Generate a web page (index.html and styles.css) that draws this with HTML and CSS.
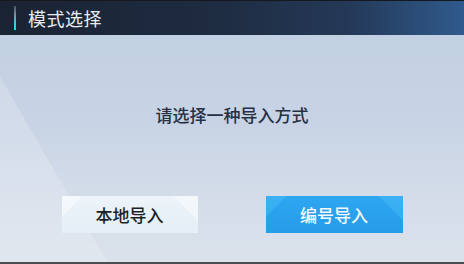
FILE: index.html
```html
<!DOCTYPE html>
<html lang="zh">
<head>
<meta charset="utf-8">
<link rel="stylesheet" href="styles.css">
</head>
<body>
<div class="win">
  <header class="head">
    <span class="accent"></span>
    <span class="title">模式选择</span>
  </header>
  <main class="body">
    <p class="prompt">请选择一种导入方式</p>
    <div class="actions">
      <button class="btn btn-light">本地导入</button>
      <button class="btn btn-blue">编号导入</button>
    </div>
  </main>
</div>
</body>
</html>
```
FILE: styles.css
```css
html, body {
  margin: 0;
  padding: 0;
}
body {
  width: 464px;
  height: 264px;
  overflow: hidden;
  font-family: "Noto Sans CJK SC", "Noto Sans", sans-serif;
}
.win {
  width: 464px;
  height: 264px;
  display: flex;
  flex-direction: column;
  box-sizing: border-box;
  border-bottom: 2px solid #4a4d52;
}
.head {
  height: 35px;
  flex: none;
  display: flex;
  align-items: center;
  box-sizing: border-box;
  border-top: 1px solid #15191f;
  background: linear-gradient(90deg, #1a2333 0%, #1e2b40 45%, #243957 75%, #2f5a8c 100%);
}
.accent {
  width: 2px;
  height: 24px;
  margin-left: 14px;
  background: linear-gradient(180deg, #4a5566 0%, #7f93a6 40%, #3cc8ea 70%, #25d4f5 100%);
}
.title {
  margin-left: 12px;
  color: #e9edf3;
  font-size: 18px;
  line-height: 24px;
  letter-spacing: 0.5px;
}
.body {
  flex: 1;
  display: flex;
  flex-direction: column;
  align-items: center;
  background:
    linear-gradient(60deg, rgba(255,255,255,0.18) 0 18%, transparent 18% 100%),
    linear-gradient(180deg, #c2d0e3 0%, #c8d4e5 40%, #d5dde9 75%, #dbe2ec 100%);
}
.prompt {
  margin: 68px 0 0;
  font-size: 17px;
  line-height: 24px;
  font-weight: 500;
  color: #273042;
}
.actions {
  margin-top: 69px;
  display: flex;
  gap: 68px;
}
.btn {
  height: 37px;
  border: none;
  padding: 0;
  font-family: "Noto Sans CJK SC", "Noto Sans", sans-serif;
  font-size: 17px;
  font-weight: 500;
  cursor: pointer;
}
.btn-light {
  width: 136px;
  color: #1c1f24;
  background:
    linear-gradient(135deg, rgba(255,255,255,0.45) 0 12%, transparent 12% 100%),
    linear-gradient(225deg, rgba(255,255,255,0.4) 0 14%, transparent 14% 100%),
    linear-gradient(180deg, #edf4f9 0%, #e4eef6 100%);
}
.btn-blue {
  width: 137px;
  color: #f4f9ff;
  background:
    linear-gradient(135deg, rgba(90,200,255,0.3) 0 12%, transparent 12% 100%),
    linear-gradient(225deg, rgba(90,200,255,0.3) 0 14%, transparent 14% 100%),
    linear-gradient(180deg, #2ea6f0 0%, #279ce9 100%);
}
```
